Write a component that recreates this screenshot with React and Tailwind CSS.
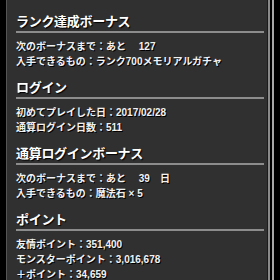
const sections = [
  {
    title: "ランク達成ボーナス",
    lines: ["次のボーナスまで：あと　 127", "入手できるもの：ランク700メモリアルガチャ"],
  },
  {
    title: "ログイン",
    lines: ["初めてプレイした日：2017/02/28", "通算ログイン日数：511"],
  },
  {
    title: "通算ログインボーナス",
    lines: ["次のボーナスまで：あと　 39　日", "入手できるもの：魔法石 × 5"],
  },
  {
    title: "ポイント",
    lines: ["友情ポイント：351,400", "モンスターポイント：3,016,678", "＋ポイント：34,659"],
  },
];

export default function App() {
  return (
    <div
      className="flex h-[280px] w-[280px] overflow-hidden bg-black"
      style={{ fontFamily: '"Noto Sans CJK JP", "Noto Sans", sans-serif' }}
    >
      <div className="w-[6px] shrink-0 bg-black" />
      <div className="w-[262px] shrink-0 border-l border-r border-l-[#555] border-r-[#1c1c1c] bg-[#303030] pl-[9px] pr-[3px] pt-[11px]">
        {sections.map((s) => (
          <div key={s.title} className="mb-[8px]">
            <h2 className="border-b-2 border-[#8c8c8c] text-[13px] font-bold leading-[20px] tracking-[-0.3px] text-white [text-shadow:1px_1px_1px_#000]">
              {s.title}
            </h2>
            <div className="pt-[6px]">
              {s.lines.map((l) => (
                <p
                  key={l}
                  className="whitespace-pre font-['Liberation_Sans','Noto_Sans_CJK_JP',sans-serif] text-[10px] font-bold leading-[15px] text-[#f2f2f2] [text-shadow:1px_1px_0_#000]"
                >
                  {l}
                </p>
              ))}
            </div>
          </div>
        ))}
      </div>
      <div className="flex shrink-0">
        <div className="w-[2px] bg-[#8a8a8a]" />
        <div className="w-[2px] bg-black" />
        <div className="w-[2px] bg-[#a8a8a8]" />
        <div className="w-[4px] bg-black" />
      </div>
    </div>
  );
}
